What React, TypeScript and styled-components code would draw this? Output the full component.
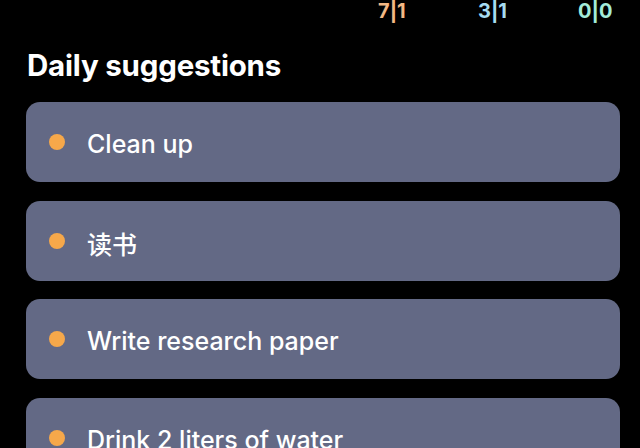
import styled, { createGlobalStyle } from "styled-components";

const GlobalStyle = createGlobalStyle`
  html, body {
    margin: 0;
    padding: 0;
    background: #000;
  }
  body {
    font-family: Inter, "Noto Sans", "Noto Sans CJK SC", sans-serif;
    -webkit-font-smoothing: antialiased;
  }
`;

type Stat = { value: string; color: string };

const stats: Stat[] = [
  { value: "7|1", color: "#f3b884" },
  { value: "3|1", color: "#a6dcf0" },
  { value: "0|0", color: "#a3ecd9" },
];

const suggestions = ["Clean up", "读书", "Write research paper", "Drink 2 liters of water"];

export default function App() {
  return (
    <>
      <GlobalStyle />
      <Page>
        <StatsRow>
          {stats.map((s) => (
            <StatItem key={s.value} $color={s.color}>
              {s.value}
            </StatItem>
          ))}
        </StatsRow>

        <Title>Daily suggestions</Title>

        <List>
          {suggestions.map((item) => (
            <Card key={item}>
              <Dot />
              <CardText>{item}</CardText>
            </Card>
          ))}
        </List>
      </Page>
    </>
  );
}

const Page = styled.div`
  width: 640px;
  height: 448px;
  overflow: hidden;
  box-sizing: border-box;
  padding: 0 20px 0 26px;
  background: #000;
`;

const StatsRow = styled.div`
  display: flex;
  padding-left: 352px;
  padding-top: 1px;
  height: 20px;
`;

const StatItem = styled.div<{ $color: string }>`
  width: 100px;
  font-size: 20px;
  line-height: 20px;
  font-weight: 700;
  color: ${(p) => p.$color};

  &:last-child {
    width: auto;
  }
`;

const Title = styled.h1`
  margin: 27px 0 20px 1px;
  font-size: 29.5px;
  line-height: 34px;
  font-weight: 700;
  color: #fff;
  letter-spacing: -0.2px;
`;

const List = styled.div`
  display: flex;
  flex-direction: column;
  gap: 18.5px;
`;

const Card = styled.div`
  height: 80px;
  border-radius: 14px;
  background: #636985;
  display: flex;
  align-items: center;
  padding-left: 23px;
  gap: 22px;
  flex-shrink: 0;
`;

const Dot = styled.span`
  width: 16px;
  height: 16px;
  border-radius: 50%;
  background: #f6a84a;
  flex-shrink: 0;
`;

const CardText = styled.span`
  font-size: 25px;
  font-weight: 500;
  color: #fff;
  margin-top: 4px;
`;
